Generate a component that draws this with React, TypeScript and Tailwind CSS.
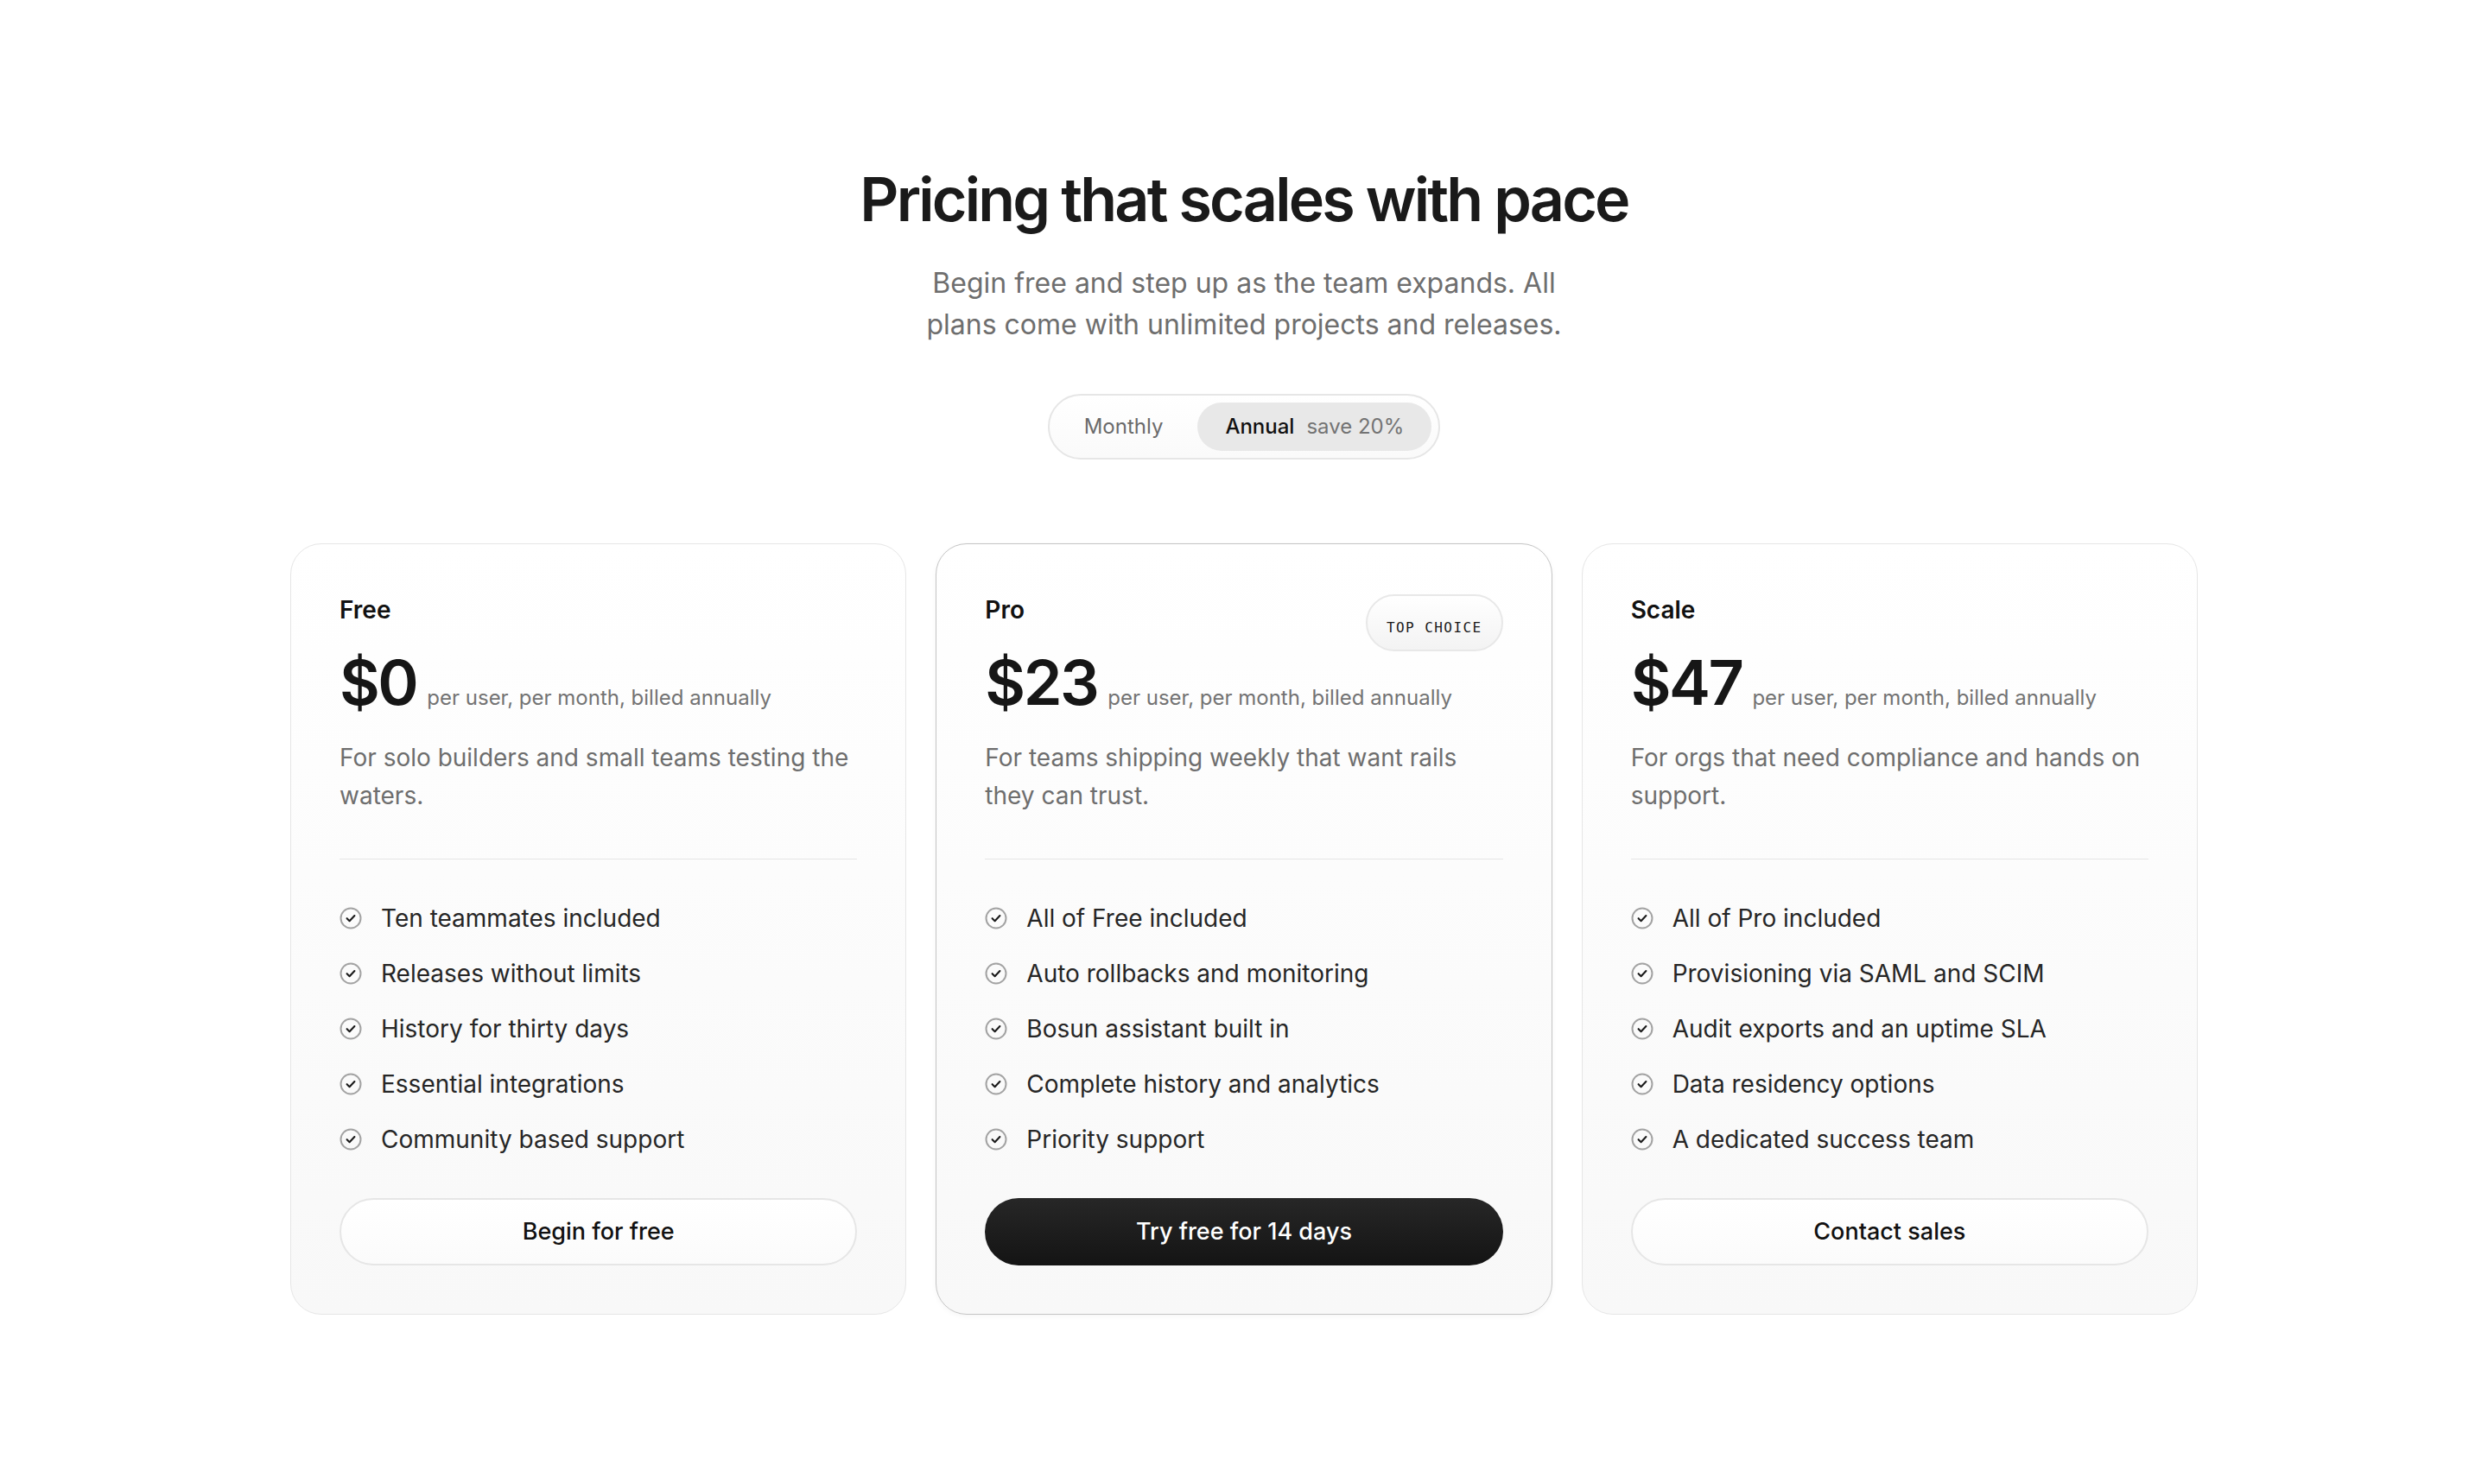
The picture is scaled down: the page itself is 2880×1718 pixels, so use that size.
import React from "react";

type Plan = {
  name: string;
  price: string;
  blurb: string;
  features: string[];
  cta: string;
  featured?: boolean;
};

const plans: Plan[] = [
  {
    name: "Free",
    price: "$0",
    blurb: "For solo builders and small teams testing the waters.",
    features: [
      "Ten teammates included",
      "Releases without limits",
      "History for thirty days",
      "Essential integrations",
      "Community based support",
    ],
    cta: "Begin for free",
  },
  {
    name: "Pro",
    price: "$23",
    blurb: "For teams shipping weekly that want rails they can trust.",
    features: [
      "All of Free included",
      "Auto rollbacks and monitoring",
      "Bosun assistant built in",
      "Complete history and analytics",
      "Priority support",
    ],
    cta: "Try free for 14 days",
    featured: true,
  },
  {
    name: "Scale",
    price: "$47",
    blurb: "For orgs that need compliance and hands on support.",
    features: [
      "All of Pro included",
      "Provisioning via SAML and SCIM",
      "Audit exports and an uptime SLA",
      "Data residency options",
      "A dedicated success team",
    ],
    cta: "Contact sales",
  },
];

function CheckCircle() {
  return (
    <svg width="26" height="26" viewBox="0 0 26 26" fill="none" className="shrink-0">
      <circle cx="13" cy="13" r="11.5" stroke="#a3a3a3" strokeWidth="2" />
      <path d="M8.6 13.2l3 3 5.8-6.2" stroke="#1a1a1a" strokeWidth="2.1" strokeLinecap="round" strokeLinejoin="round" />
    </svg>
  );
}

function PlanCard({ plan }: { plan: Plan }) {
  return (
    <div
      className={
        "relative flex flex-col rounded-[36px] border bg-gradient-to-b from-white to-[#f8f8f8] p-14 " +
        (plan.featured ? "border-[#c4c4c4] shadow-[0_2px_6px_rgba(0,0,0,0.04)]" : "border-[#e6e6e6]")
      }
    >
      {plan.featured && (
        <span className="absolute right-[56px] top-[58px] flex h-[66px] items-center rounded-full border-2 border-[#e8e8e8] bg-gradient-to-b from-white to-[#f3f3f3] px-[22px] pt-[12px] font-['DejaVu_Sans_Mono',monospace] text-[16px] tracking-[0.09em] text-[#1a1a1a]">
          TOP CHOICE
        </span>
      )}
      <div className="text-[28px] font-semibold leading-[40px] text-[#111]">{plan.name}</div>
      <div className="mt-7 flex items-baseline gap-3">
        <span className="text-[72px] font-semibold leading-none tracking-[-0.035em] text-[#161616]">{plan.price}</span>
        <span className="text-[24px] text-[#737373]">per user, per month, billed annually</span>
      </div>
      <p className="mt-[29px] text-[28px] leading-[44px] text-[#6e6e6e]">{plan.blurb}</p>
      <div className="mt-[51px] h-px bg-[#e5e5e5]" />
      <ul className="mt-12 flex flex-col gap-6">
        {plan.features.map((f) => (
          <li key={f} className="flex items-center gap-[22px] text-[28px] leading-[40px] text-[#262626]">
            <CheckCircle />
            {f}
          </li>
        ))}
      </ul>
      <button
        className={
          "mt-12 h-[78px] w-full rounded-full text-[27px] font-medium " +
          (plan.featured
            ? "bg-gradient-to-b from-[#272727] to-[#141414] text-white"
            : "border-2 border-[#e6e6e6] bg-gradient-to-b from-white to-[#fbfbfb] text-[#111]")
        }
      >
        {plan.cta}
      </button>
    </div>
  );
}

export default function App() {
  return (
    <div className="min-h-screen bg-white pt-[192px] pb-[190px] font-['Inter',sans-serif]">
      <div className="mx-auto flex max-w-[2208px] flex-col items-center">
        <h1 className="text-[70px] font-semibold leading-[1.1] tracking-[-0.04em] text-[#1a1a1a]">
          Pricing that scales with pace
        </h1>
        <p className="mt-[35px] max-w-[760px] text-center text-[32px] leading-[48px] text-[#6e6e6e]">
          Begin free and step up as the team expands. All plans come with unlimited projects and releases.
        </p>

        <div className="mt-14 flex items-center gap-2 rounded-full border-2 border-[#e6e6e6] bg-gradient-to-b from-white to-[#fafafa] p-2">
          <button className="h-[56px] rounded-full px-8 text-[24px] text-[#6b6b6b]">Monthly</button>
          <button className="flex h-[56px] items-center gap-[14px] rounded-full bg-[#e8e8e8] px-8 text-[24px]">
            <span className="font-medium text-[#111]">Annual</span>
            <span className="text-[#737373]">save 20%</span>
          </button>
        </div>

        <div className="mt-[97px] grid w-full grid-cols-3 gap-[34px]">
          {plans.map((p) => (
            <PlanCard key={p.name} plan={p} />
          ))}
        </div>
      </div>
    </div>
  );
}
